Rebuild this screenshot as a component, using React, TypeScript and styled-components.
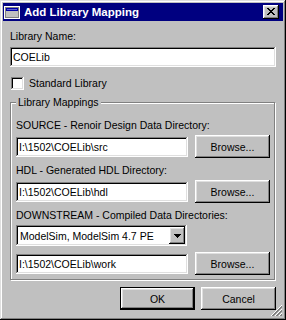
import React from 'react';
import styled, { createGlobalStyle } from 'styled-components';

const GlobalStyle = createGlobalStyle`
  html, body {
    margin: 0;
    padding: 0;
    background: #c0c0c0;
  }
  body {
    font-family: "Liberation Sans", Arial, sans-serif;
    font-size: 10.5px;
    color: #000;
  }
`;

const raised = `
  box-shadow: inset -1px -1px #000, inset 1px 1px #fff,
    inset -2px -2px #808080, inset 2px 2px #dfdfdf;
`;

const sunken = `
  box-shadow: inset -1px -1px #fff, inset 1px 1px #808080,
    inset -2px -2px #dfdfdf, inset 2px 2px #000;
`;

const Window = styled.div`
  position: relative;
  width: 286px;
  height: 320px;
  box-sizing: border-box;
  padding: 3px;
  background: #c0c0c0;
  box-shadow: inset -1px -1px #000, inset 1px 1px #dfdfdf,
    inset -2px -2px #808080, inset 2px 2px #fff;
  display: flex;
  flex-direction: column;
`;

const TitleBar = styled.div`
  height: 18px;
  background: #000080;
  display: flex;
  align-items: center;
  gap: 4px;
  padding: 0 4px 0 1px;
`;

const TitleText = styled.div`
  flex: 1;
  color: #fff;
  font-weight: bold;
  font-size: 11.5px;
  line-height: 18px;
  white-space: nowrap;
`;

const CloseButton = styled.div`
  width: 16px;
  height: 14px;
  background: #c0c0c0;
  ${raised}
  display: flex;
  align-items: center;
  justify-content: center;
  svg { margin: 0 1px 1px 0; }
`;

const Content = styled.div`
  flex: 1;
  display: flex;
  flex-direction: column;
  padding: 0 7px;
`;

const Label = styled.div<{ $top?: number }>`
  line-height: 13px;
  margin-top: ${p => p.$top ?? 0}px;
  white-space: nowrap;
`;

const TextBox = styled.div<{ $top?: number }>`
  height: 20px;
  box-sizing: border-box;
  margin-top: ${p => p.$top ?? 0}px;
  padding: 0 3px;
  background: #fff;
  ${sunken}
  line-height: 20px;
  white-space: nowrap;
  overflow: hidden;
  flex-shrink: 0;
`;

const CheckRow = styled.div`
  display: flex;
  align-items: center;
  gap: 5px;
  margin: 10px 0 0 1px;
  line-height: 13px;
`;

const CheckBox = styled.div`
  width: 13px;
  height: 13px;
  background: #fff;
  ${sunken}
`;

const Group = styled.fieldset`
  margin: 6px 1px 0 0;
  padding: 10px 4px 4px 5px;
  border: 1px solid #808080;
  box-shadow: inset 1px 1px #fff, 1px 1px #fff;
  display: flex;
  flex-direction: column;
  gap: 6px;
  min-width: 0;
`;

const Legend = styled.legend`
  padding: 0 2px;
  line-height: 13px;
  background: #c0c0c0;
`;

const Section = styled.div`
  display: flex;
  flex-direction: column;
  gap: 3px;
`;

const Row = styled.div`
  display: flex;
  align-items: center;
  gap: 7px;

  & > ${TextBox} {
    flex: 1;
  }
`;

const Button = styled.div<{ $default?: boolean }>`
  width: 75px;
  height: 23px;
  box-sizing: border-box;
  background: #c0c0c0;
  ${raised}
  border: ${p => (p.$default ? '1px solid #000' : 'none')};
  display: flex;
  align-items: center;
  justify-content: center;
  flex-shrink: 0;
`;

const Combo = styled.div`
  width: 171px;
  height: 21px;
  box-sizing: border-box;
  padding: 2px;
  background: #fff;
  ${sunken}
  display: flex;
  align-items: center;
`;

const ComboText = styled.div`
  flex: 1;
  padding-left: 2px;
  white-space: nowrap;
`;

const ComboArrow = styled.div`
  width: 16px;
  height: 17px;
  background: #c0c0c0;
  ${raised}
  display: flex;
  align-items: center;
  justify-content: center;
`;

const ButtonBar = styled.div`
  display: flex;
  justify-content: flex-end;
  gap: 6px;
  margin-top: 7px;
`;

const Grip = styled.svg`
  position: absolute;
  right: 3px;
  bottom: 3px;
`;

const closePattern = [
  'XX....XX',
  '.XX..XX.',
  '..XXXX..',
  '...XX...',
  '..XXXX..',
  '.XX..XX.',
  'XX....XX',
];

const CloseGlyph = () => (
  <svg width="8" height="7" shapeRendering="crispEdges">
    {closePattern.flatMap((row, y) =>
      row.split('').map((c, x) =>
        c === 'X' ? <rect key={`${x}-${y}`} x={x} y={y} width="1" height="1" fill="#000" /> : null
      )
    )}
  </svg>
);

const WindowIcon = () => (
  <svg width="16" height="16" shapeRendering="crispEdges">
    <rect x="0" y="2" width="16" height="13" fill="#fff" />
    <rect x="1" y="3" width="14" height="11" fill="#808080" />
    <rect x="2" y="4" width="12" height="9" fill="#c0c0c0" />
    <rect x="2" y="4" width="12" height="3" fill="#0000a8" />
    <rect x="3" y="5" width="10" height="1" fill="#6060d0" />
  </svg>
);

const paths = [
  { label: 'SOURCE - Renoir Design Data Directory:', value: 'I:\\1502\\COELib\\src' },
  { label: 'HDL - Generated HDL Directory:', value: 'I:\\1502\\COELib\\hdl' },
];

export default function App() {
  return (
    <>
      <GlobalStyle />
      <Window>
        <TitleBar>
          <WindowIcon />
          <TitleText>Add Library Mapping</TitleText>
          <CloseButton>
            <CloseGlyph />
          </CloseButton>
        </TitleBar>

        <Content>
          <Label $top={9}>Library Name:</Label>
          <TextBox $top={4}>COELib</TextBox>

          <CheckRow>
            <CheckBox />
            <span>Standard Library</span>
          </CheckRow>

          <Group>
            <Legend>Library Mappings</Legend>
            {paths.map(p => (
              <Section key={p.label}>
                <Label>{p.label}</Label>
                <Row>
                  <TextBox>{p.value}</TextBox>
                  <Button>Browse...</Button>
                </Row>
              </Section>
            ))}
            <Section>
              <Label>DOWNSTREAM - Compiled Data Directories:</Label>
              <Combo>
                <ComboText>ModelSim, ModelSim 4.7 PE</ComboText>
                <ComboArrow>
                  <svg width="7" height="4" shapeRendering="crispEdges">
                    <path d="M0 0h7v1h-1v1h-1v1h-1v1h-1v-1h-1v-1h-1v-1h-1z" fill="#000" />
                  </svg>
                </ComboArrow>
              </Combo>
            </Section>
            <Row>
              <TextBox>I:\1502\COELib\work</TextBox>
              <Button>Browse...</Button>
            </Row>
          </Group>

          <ButtonBar>
            <Button $default>OK</Button>
            <Button>Cancel</Button>
          </ButtonBar>
        </Content>

        <Grip width="12" height="12" shapeRendering="crispEdges">
          <path d="M11 0L0 11M11 4L4 11M11 8L8 11" stroke="#fff" strokeWidth="1" />
          <path d="M11 1L1 11M11 2L2 11M11 5L5 11M11 6L6 11M11 9L9 11M11 10L10 11" stroke="#808080" strokeWidth="1" />
        </Grip>
      </Window>
    </>
  );
}
